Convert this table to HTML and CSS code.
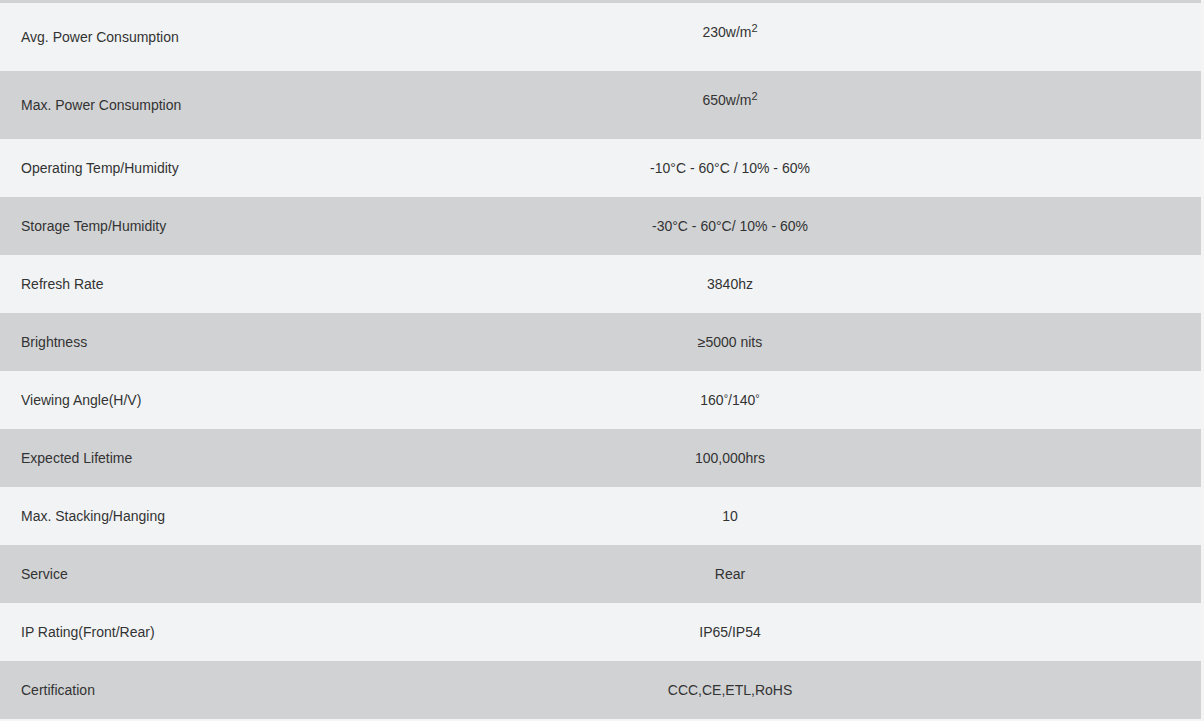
FILE: index.html
```html
<!DOCTYPE html>
<html lang="en">
<head>
<meta charset="utf-8">
<title>Specifications</title>
<link rel="stylesheet" href="styles.css">
</head>
<body>
<div class="top-band"></div>
<table class="specs">
  <colgroup><col class="col-label"><col class="col-value"></colgroup>
  <tbody>
    <tr class="light tall"><td class="label">Avg. Power Consumption</td><td class="value top">230w/m<sup>2</sup></td></tr>
    <tr class="dark tall"><td class="label">Max. Power Consumption</td><td class="value top">650w/m<sup>2</sup></td></tr>
    <tr class="light"><td class="label">Operating Temp/Humidity</td><td class="value">-10°C - 60°C / 10% - 60%</td></tr>
    <tr class="dark"><td class="label">Storage Temp/Humidity</td><td class="value">-30°C - 60°C/ 10% - 60%</td></tr>
    <tr class="light"><td class="label">Refresh Rate</td><td class="value">3840hz</td></tr>
    <tr class="dark"><td class="label">Brightness</td><td class="value">≥5000 nits</td></tr>
    <tr class="light"><td class="label">Viewing Angle(H/V)</td><td class="value">160<sup class="deg">°</sup>/140<sup class="deg">°</sup></td></tr>
    <tr class="dark"><td class="label">Expected Lifetime</td><td class="value">100,000hrs</td></tr>
    <tr class="light"><td class="label">Max. Stacking/Hanging</td><td class="value">10</td></tr>
    <tr class="dark"><td class="label">Service</td><td class="value">Rear</td></tr>
    <tr class="light"><td class="label">IP Rating(Front/Rear)</td><td class="value">IP65/IP54</td></tr>
    <tr class="dark"><td class="label">Certification</td><td class="value">CCC,CE,ETL,RoHS</td></tr>
  </tbody>
</table>
</body>
</html>
```
FILE: styles.css
```css
html, body {
  margin: 0;
  padding: 0;
  background: #f5f5f6;
}
body {
  font-family: "Liberation Sans", Arial, sans-serif;
  font-size: 14px;
  color: #333;
}
.top-band {
  width: 1201px;
  height: 3px;
  background: #d1d2d4;
}
.specs {
  width: 1201px;
  border-collapse: collapse;
  table-layout: fixed;
}
.col-label { width: 259px; }
.specs td {
  padding: 20px 20px;
  line-height: 18px;
  vertical-align: middle;
}
.specs td.label { padding-left: 21px; }
.specs tr.tall td {
  padding-top: 25px;
  padding-bottom: 25px;
}
.specs tr.tall td.top {
  vertical-align: top;
  padding-top: 20px;
  padding-bottom: 30px;
}
.light { background: #f2f3f5; }
.dark { background: #d1d2d4; }
.value { text-align: center; }
sup {
  font-size: 11px;
  line-height: 0;
  vertical-align: 5px;
}
sup.deg {
  font-size: 11px;
  vertical-align: 3px;
}
```
